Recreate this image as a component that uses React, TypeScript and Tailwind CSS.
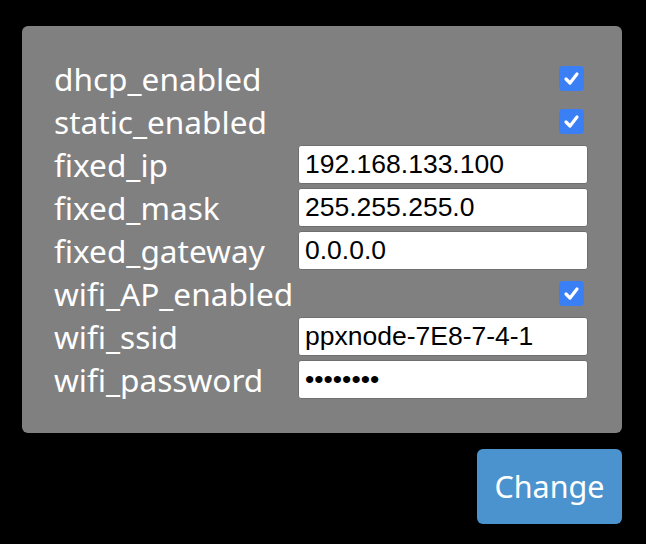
import React from "react";

const rows: { label: string; type: "check" | "text" | "password"; value?: string }[] = [
  { label: "dhcp_enabled", type: "check" },
  { label: "static_enabled", type: "check" },
  { label: "fixed_ip", type: "text", value: "192.168.133.100" },
  { label: "fixed_mask", type: "text", value: "255.255.255.0" },
  { label: "fixed_gateway", type: "text", value: "0.0.0.0" },
  { label: "wifi_AP_enabled", type: "check" },
  { label: "wifi_ssid", type: "text", value: "ppxnode-7E8-7-4-1" },
  { label: "wifi_password", type: "password", value: "••••••••" },
];

function Check() {
  return (
    <div className="w-[25px] h-[25px] rounded-[4px] bg-[#3b7ff5] flex items-center justify-center mr-[4px]">
      <svg width="17" height="17" viewBox="0 0 17 17">
        <path d="M3 9 L7 13 L14 4" fill="none" stroke="white" strokeWidth="3.2" strokeLinecap="round" strokeLinejoin="round" />
      </svg>
    </div>
  );
}

export default function App() {
  return (
    <div className="w-[646px] h-[544px] bg-black relative" style={{ fontFamily: '"Noto Sans", sans-serif' }}>
      <div className="pt-[26px] pl-[22px] w-[622px]">
        <div className="bg-[#808080] rounded-[6px] pl-[32px] pr-[34px] pt-[31px] pb-[32px]">
          {rows.map((r) => (
            <div key={r.label} className="h-[43px] flex items-center">
              <div className="w-[244px] h-[43px] pt-[1px] text-white text-[31.6px] leading-[42px] whitespace-nowrap">{r.label}</div>
              <div className="w-[290px] flex items-center justify-end">
                {r.type === "check" ? (
                  <Check />
                ) : (
                  <div
                    className="w-[290px] h-[39px] bg-white rounded-[3px] border border-[#6f6f6f] pl-[6px] flex items-center text-black text-[26.5px]"
                    style={{ fontFamily: '"Liberation Sans", Arial, sans-serif' }}
                  >
                    {r.value}
                  </div>
                )}
              </div>
            </div>
          ))}
        </div>
        <div className="flex justify-end mt-[16px]">
          <div className="w-[145px] h-[75px] bg-[#4b93cf] rounded-[6px] flex items-center justify-center text-white text-[30.5px]">
            Change
          </div>
        </div>
      </div>
    </div>
  );
}
